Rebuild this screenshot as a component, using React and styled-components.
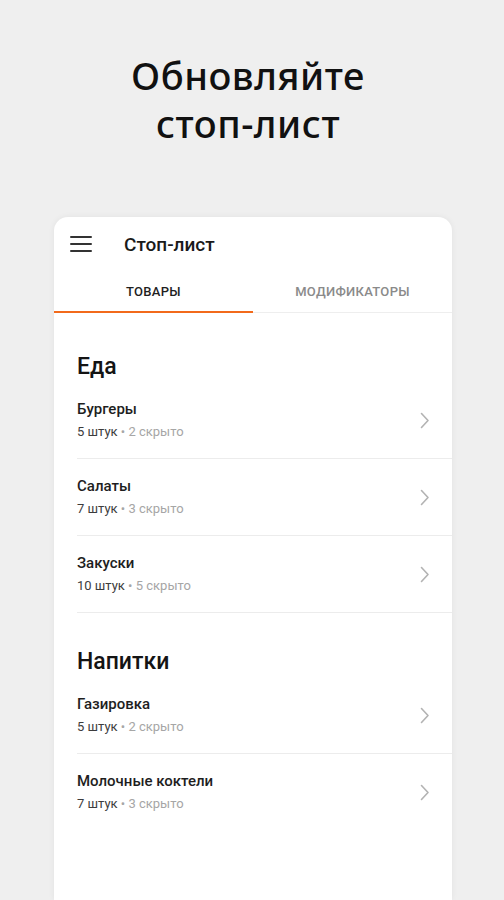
import React, { useState } from "react"
import styled, { createGlobalStyle } from "styled-components"

const GlobalStyle = createGlobalStyle`
  html, body {
    margin: 0;
    padding: 0;
    background: #efefef;
  }
  body {
    font-family: Roboto, "Noto Sans", sans-serif;
    -webkit-font-smoothing: antialiased;
  }
`

const Page = styled.div`
  height: 900px;
  overflow: hidden;
  display: flex;
  flex-direction: column;
  align-items: center;
`

const Headline = styled.h1`
  margin: 51px 0 0 -8px;
  font-family: "Noto Sans", sans-serif;
  font-weight: 500;
  font-size: 38px;
  line-height: 48px;
  color: #111;
  text-align: center;
  letter-spacing: 0.5px;
`

const Card = styled.div`
  margin-top: 70px;
  width: 398px;
  flex: 1;
  margin-left: 2px;
  background: #fff;
  border-radius: 14px 14px 0 0;
  box-shadow: 0 0 6px rgba(0, 0, 0, 0.06);
  display: flex;
  flex-direction: column;
`

const TopBar = styled.div`
  height: 54px;
  display: flex;
  align-items: center;
  padding-left: 16px;
`

const MenuButton = styled.div`
  width: 22px;
  display: flex;
  flex-direction: column;
  gap: 5px;
  span {
    display: block;
    height: 2px;
    background: #333;
    border-radius: 1px;
  }
`

const BarTitle = styled.div`
  margin-left: 32px;
  font-size: 19px;
  font-weight: 500;
  color: #1a1a1a;
`

const Tabs = styled.div`
  display: flex;
  border-bottom: 1px solid #eeeeee;
`

const Tab = styled.div`
  flex: 1;
  height: 40px;
  display: flex;
  align-items: center;
  justify-content: center;
  font-size: 13px;
  font-weight: 500;
  letter-spacing: 0.3px;
  text-transform: uppercase;
  color: ${props => (props.active ? "#1f1f1f" : "#8a8a8a")};
  border-bottom: 2px solid ${props => (props.active ? "#f26a1b" : "transparent")};
  margin-bottom: -1px;
  cursor: pointer;
`

const Content = styled.div`
  padding-left: 23px;
`

const SectionTitle = styled.h2`
  margin: ${props => (props.first ? "41px" : "36px")} 0 2px;
  font-size: 23px;
  line-height: 26px;
  font-weight: 500;
  color: #141414;
`

const Row = styled.div`
  display: flex;
  align-items: center;
  justify-content: space-between;
  padding: 18px 22px 17px 0;
  border-bottom: ${props => (props.last ? "none" : "1px solid #ececec")};
`

const RowText = styled.div`
  display: flex;
  flex-direction: column;
`

const RowTitle = styled.div`
  font-size: 15px;
  line-height: 18px;
  font-weight: 500;
  color: #1e1e1e;
`

const RowSub = styled.div`
  margin-top: 5px;
  font-size: 13px;
  line-height: 18px;
  color: #3c3c3c;
  span {
    color: #a6a6a6;
  }
`

const Chevron = () => (
  <svg width="10" height="17" viewBox="0 0 10 17" fill="none">
    <path d="M1.5 1.5 L8 8.5 L1.5 15.5" stroke="#b3b3b3" strokeWidth="1.6" strokeLinecap="round" strokeLinejoin="round" />
  </svg>
)

const sections = [
  {
    title: "Еда",
    items: [
      { name: "Бургеры", count: 5, hidden: 2 },
      { name: "Салаты", count: 7, hidden: 3 },
      { name: "Закуски", count: 10, hidden: 5 },
    ],
  },
  {
    title: "Напитки",
    items: [
      { name: "Газировка", count: 5, hidden: 2 },
      { name: "Молочные коктели", count: 7, hidden: 3, last: true },
    ],
  },
]

const App = () => {
  const [tab, setTab] = useState(0)

  return (
    <Page>
      <GlobalStyle />
      <Headline>
        Обновляйте
        <br />
        стоп-лист
      </Headline>
      <Card>
        <TopBar>
          <MenuButton>
            <span />
            <span />
            <span />
          </MenuButton>
          <BarTitle>Стоп-лист</BarTitle>
        </TopBar>
        <Tabs>
          <Tab active={tab === 0} onClick={() => setTab(0)}>Товары</Tab>
          <Tab active={tab === 1} onClick={() => setTab(1)}>Модификаторы</Tab>
        </Tabs>
        <Content>
          {sections.map((section, i) => (
            <div key={section.title}>
              <SectionTitle first={i === 0}>{section.title}</SectionTitle>
              {section.items.map(item => (
                <Row key={item.name} last={item.last}>
                  <RowText>
                    <RowTitle>{item.name}</RowTitle>
                    <RowSub>
                      {item.count} штук <span>• {item.hidden} скрыто</span>
                    </RowSub>
                  </RowText>
                  <Chevron />
                </Row>
              ))}
            </div>
          ))}
        </Content>
      </Card>
    </Page>
  )
}

export default App
